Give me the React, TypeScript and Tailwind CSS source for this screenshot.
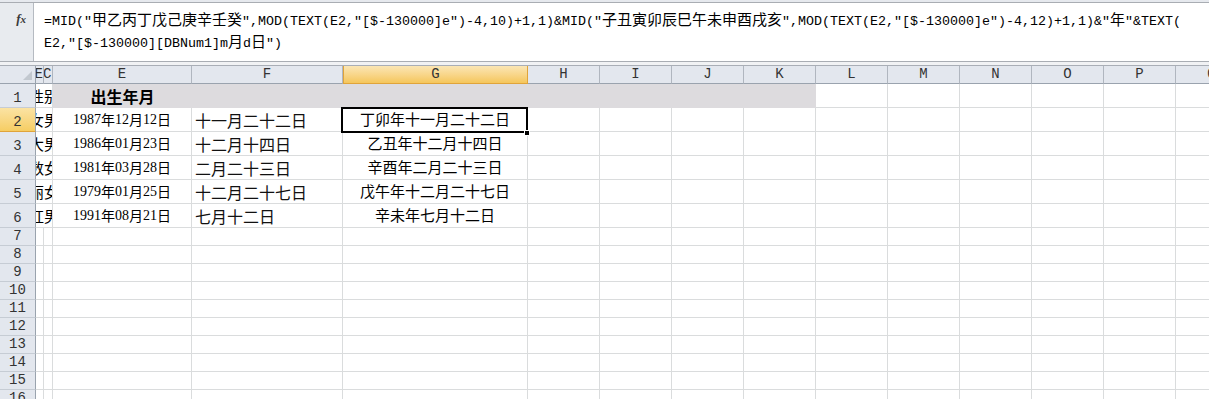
import React from "react";

const CJK = /([\u3400-\u9fff]+)/;

function Mixed({ text }: { text: string }) {
  const parts = text.split(CJK);
  return (
    <>
      {parts.map((p, i) =>
        CJK.test(p) ? (
          <span key={i} className="font-['Noto_Sans_CJK_SC',sans-serif] text-[15px]">
            {p}
          </span>
        ) : (
          <span key={i}>{p}</span>
        )
      )}
    </>
  );
}

const LINE1 =
  '=MID("甲乙丙丁戊己庚辛壬癸",MOD(TEXT(E2,"[$-130000]e")-4,10)+1,1)&MID("子丑寅卯辰巳午未申酉戌亥",MOD(TEXT(E2,"[$-130000]e")-4,12)+1,1)&"年"&TEXT(';
const LINE2 = 'E2,"[$-130000][DBNum1]m月d日")';

const WIDE = ["H", "I", "J", "K", "L", "M", "N", "O", "P", "Q"];

const DATA = [
  { side: "女男", e: ["1987", "年", "12", "月", "12", "日"], f: "十一月二十二日", g: "丁卯年十一月二十二日" },
  { side: "大男", e: ["1986", "年", "01", "月", "23", "日"], f: "十二月十四日", g: "乙丑年十二月十四日" },
  { side: "数女", e: ["1981", "年", "03", "月", "28", "日"], f: "二月二十三日", g: "辛酉年二月二十三日" },
  { side: "丽女", e: ["1979", "年", "01", "月", "25", "日"], f: "十二月二十七日", g: "戊午年十二月二十七日" },
  { side: "红男", e: ["1991", "年", "08", "月", "21", "日"], f: "七月十二日", g: "辛未年七月十二日" },
];

function RowHdr({ n, active }: { n: number; active?: boolean }) {
  return (
    <div
      className={
        active
          ? "w-[36px] shrink-0 flex items-end justify-center pb-[1px] border-r border-b border-r-[#9aa3ae] border-b-[#e0a43a] bg-linear-to-b from-[#fbe3a3] to-[#f6cd62] text-[14px] leading-[16px] text-[#333] font-['Liberation_Mono',monospace]"
          : "w-[36px] shrink-0 flex items-end justify-center pb-[1px] border-r border-b border-r-[#9aa3ae] border-b-[#c6ccd4] bg-[#e3e7ee] text-[14px] leading-[16px] text-[#333] font-['Liberation_Mono',monospace]"
      }
    >
      {n}
    </div>
  );
}

function EmptyCells({ from }: { from: number }) {
  return (
    <>
      {WIDE.slice(from).map((c) => (
        <div key={c} className="w-[72px] shrink-0 border-r border-b border-[#dadcdd] bg-white" />
      ))}
    </>
  );
}

export default function App() {
  const emptyRows = [7, 8, 9, 10, 11, 12, 13, 14, 15, 16];
  return (
    <div className="w-[1209px] h-[399px] overflow-hidden bg-white relative font-['Liberation_Sans','Noto_Sans_CJK_SC',sans-serif]">
      {/* top strip */}
      <div className="h-[2px] bg-[#e6e9ee]" />
      {/* formula bar */}
      <div className="flex h-[60px] border-t border-b border-[#a9adb3]">
        <div className="w-[34px] shrink-0 bg-[#e8ebef] border-r border-[#b5bac1] flex justify-end pr-[7px] pt-[9px]">
          <span className="font-['Liberation_Serif',serif] italic font-bold text-[13px] leading-[14px] text-[#3a3a3a]">
            f<span className="text-[11px]">x</span>
          </span>
        </div>
        <div className="flex-1 bg-white pl-[10px] pt-[6px] font-['Liberation_Mono','Noto_Sans_CJK_SC',monospace] text-[13.33px] leading-[19px] text-black whitespace-nowrap">
          <div>
            <Mixed text={LINE1} />
          </div>
          <div>
            <Mixed text={LINE2} />
          </div>
        </div>
      </div>
      {/* gap */}
      <div className="h-[3px] bg-[#f1f2f4]" />

      {/* grid */}
      <div className="relative">
        {/* column headers */}
        <div className="flex h-[19px] border-t border-[#a9aeb6] text-[14px] leading-[17px] text-[#333] font-['Liberation_Mono',monospace]">
          <div className="w-[36px] shrink-0 border-r border-b border-r-[#9aa3ae] border-b-[#9aa3ae] bg-[#e3e7ee] flex items-end justify-end pr-[3px] pb-[3px]">
            <svg width="9" height="9" viewBox="0 0 9 9">
              <polygon points="9,0 9,9 0,9" fill="#c2c8cf" />
            </svg>
          </div>
          <div className="w-[8px] shrink-0 border-r border-b border-r-[#b0b6bf] border-b-[#9aa3ae] bg-[#e3e7ee] overflow-hidden flex justify-end">
            <span>E</span>
          </div>
          <div className="w-[9px] shrink-0 border-r border-b border-r-[#b0b6bf] border-b-[#9aa3ae] bg-[#e3e7ee] overflow-hidden flex justify-start">
            <span className="-ml-[1px]">C</span>
          </div>
          <div className="w-[139px] shrink-0 border-r border-b border-r-[#b0b6bf] border-b-[#9aa3ae] bg-[#e3e7ee] text-center">E</div>
          <div className="w-[151px] shrink-0 border-r border-b border-r-[#b0b6bf] border-b-[#9aa3ae] bg-[#e3e7ee] text-center">F</div>
          <div className="w-[185px] shrink-0 border border-t-0 border-[#e0a43a] bg-linear-to-b from-[#fbe6b4] to-[#f5c65a] text-center">G</div>
          {WIDE.map((c) => (
            <div key={c} className="w-[72px] shrink-0 border-r border-b border-r-[#b0b6bf] border-b-[#9aa3ae] bg-[#e3e7ee] text-center">
              {c}
            </div>
          ))}
        </div>

        {/* row 1 */}
        <div className="flex h-[24px]">
          <RowHdr n={1} />
          <div className="w-[17px] shrink-0 border-r border-b border-[#dadcdd] overflow-hidden flex justify-center items-center">
            <span className="shrink-0 text-[15px] leading-[20px] font-['Noto_Sans_CJK_SC',sans-serif] text-black whitespace-nowrap">性别</span>
          </div>
          <div className="w-[763px] shrink-0 bg-[#dddbde] flex">
            <div className="w-[139px] shrink-0 flex items-center justify-center font-bold text-[16px] text-black font-['Noto_Sans_CJK_SC',sans-serif]">
              出生年月
            </div>
          </div>
          <EmptyCells from={4} />
        </div>

        {/* rows 2-6 */}
        {DATA.map((r, idx) => (
          <div key={idx} className="flex h-[24px]">
            <RowHdr n={idx + 2} active={idx === 0} />
            <div className="w-[17px] shrink-0 border-r border-b border-[#dadcdd] overflow-hidden flex justify-center items-center">
              <span className="shrink-0 text-[15px] leading-[20px] font-['Noto_Sans_CJK_SC',sans-serif] text-black whitespace-nowrap">{r.side}</span>
            </div>
            <div className="w-[139px] shrink-0 border-r border-b border-[#dadcdd] flex items-center justify-center text-[14px] text-black whitespace-nowrap">
              {r.e.map((p, i) =>
                i % 2 === 0 ? (
                  <span key={i} className="font-['Liberation_Serif',serif]">{p}</span>
                ) : (
                  <span key={i} className="font-['Noto_Sans_CJK_SC',sans-serif]">{p}</span>
                )
              )}
            </div>
            <div className="w-[151px] shrink-0 border-r border-b border-[#dadcdd] flex items-center pl-[3px] text-[16px] text-[#111] font-['Noto_Sans_CJK_SC',sans-serif] whitespace-nowrap">
              {r.f}
            </div>
            <div className="w-[185px] shrink-0 border-r border-b border-[#dadcdd] flex items-center justify-center text-[15px] text-black font-['Noto_Sans_CJK_SC',sans-serif] whitespace-nowrap">
              {r.g}
            </div>
            <EmptyCells from={0} />
          </div>
        ))}

        {/* empty rows */}
        {emptyRows.map((n) => (
          <div key={n} className="flex h-[18px]">
            <RowHdr n={n} />
            <div className="w-[8px] shrink-0 border-r border-b border-[#dadcdd]" />
            <div className="w-[9px] shrink-0 border-r border-b border-[#dadcdd]" />
            <div className="w-[139px] shrink-0 border-r border-b border-[#dadcdd]" />
            <div className="w-[151px] shrink-0 border-r border-b border-[#dadcdd]" />
            <div className="w-[185px] shrink-0 border-r border-b border-[#dadcdd]" />
            <EmptyCells from={0} />
          </div>
        ))}

        {/* active cell G2 selection */}
        <div className="absolute left-[341px] top-[42px] w-[187px] h-[26px] border-2 border-black pointer-events-none" />
        <div className="absolute left-[524px] top-[65px] w-[6px] h-[6px] bg-black border border-white pointer-events-none" />
      </div>
    </div>
  );
}
